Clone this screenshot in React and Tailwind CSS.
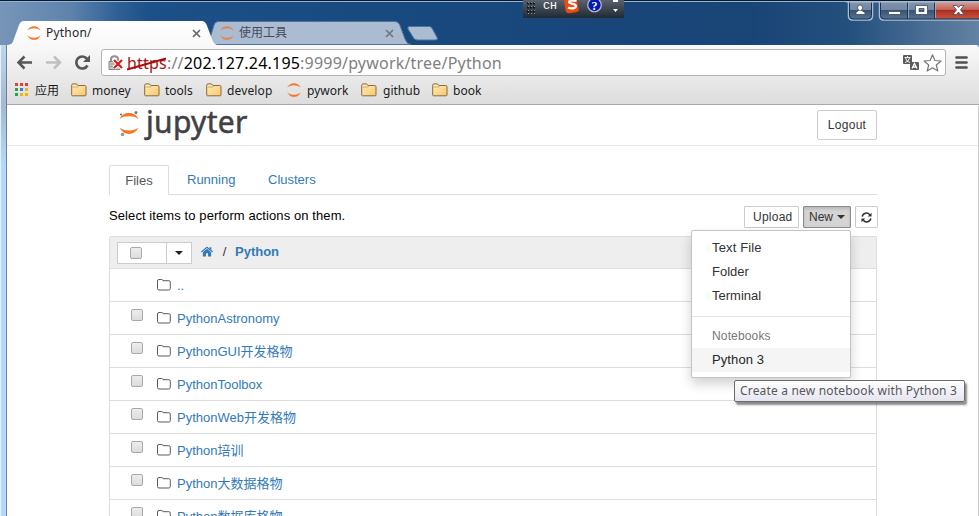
import React from "react";

const UI = "font-['Noto_Sans','Noto_Sans_CJK_SC',sans-serif]";
const PAGE = "font-['Liberation_Sans','Noto_Sans_CJK_SC',sans-serif]";

function Ring({ className = "" }) {
  return (
    <svg className={"shrink-0 " + className} width="14" height="14" viewBox="0 0 14 14">
      <path d="M0.3 4.6C2 1.400 4.500.2 7 .2s5 1.200 6.700 4.400C11.500 3 9.500 2.300 7 2.300S2.500 3 .3 4.600z" fill="#f37726" />
      <path d="M0.3 9.400C2 12.600 4.500 13.800 7 13.800s5-1.200 6.700-4.400C11.500 11 9.500 11.700 7 11.700S2.500 11 .3 9.400z" fill="#f37726" />
    </svg>
  );
}

function BookmarkFolder() {
  return (
    <svg className="shrink-0" width="16" height="14" viewBox="0 0 16 14">
      <defs>
        <linearGradient id="fold" x1="0" y1="0" x2="1" y2="1">
          <stop offset="0" stopColor="#ffefbb" />
          <stop offset="1" stopColor="#f9c66c" />
        </linearGradient>
      </defs>
      <path d="M.7 12V2.200Q.7.9 2 .9h3.600l1.300 1.600h6.800q1.300 0 1.300 1.300V12q0 .8-.8.8H1.500Q.7 12.800.7 12z" fill="url(#fold)" stroke="#8b6841" />
      <path d="M1.500 4h5l1.300-1" fill="none" stroke="#c9985a" strokeWidth=".8" />
    </svg>
  );
}

function Close({ className = "" }) {
  return (
    <svg className={className} width="9" height="9" viewBox="0 0 9 9">
      <path d="M1 1l7 7M8 1L1 8" stroke="#63666b" strokeWidth="1.700" />
    </svg>
  );
}

function TabStrip() {
  return (
    <div className="relative h-[45px] w-full shrink-0">
      <svg className="absolute left-0 top-0" width="979" height="46" viewBox="0 0 979 46">
        <defs>
          <linearGradient id="tab" x1="0" y1="0" x2="0" y2="1">
            <stop offset="0" stopColor="#ffffff" />
            <stop offset="1" stopColor="#f8f8f8" />
          </linearGradient>
        </defs>
        <path d="M203 44.500C208 44.500 208.500 43 209.500 40L214 25Q215 21.500 218.500 21.500H395Q398.500 21.500 399.800 25L405 39Q407 44.500 411 44.500z" fill="#abbbd1" stroke="#51739b" />
        <path d="M409.500 26.500h20q2 0 3 2.500l4.600 8.500q1 2.500-1.600 2.500h-18q-3.500 0-4.500-3l-5-8q-.8-2.500 1.500-2.500z" fill="#abbbd1" stroke="#51739b" />
        <path d="M7 46V45C12 44.500 12.500 43 13.500 40L19 25Q20.500 21 24 21H202Q205 21 206.500 24.500L212 39Q214 45 218 45V46z" fill="url(#tab)" />
      </svg>
      <div className={"relative flex h-full items-start pl-[27px] pt-[26px] text-[12px] leading-[14px] text-[#24262c] " + UI}>
        <Ring />
        <span className="ml-[5px] w-[146px] tracking-[.2px]">Python/</span>
        <Close className="mt-[3px]" />
        <Ring className="ml-[19px] opacity-80" />
        <span className="ml-[5px] w-[146px] text-[#454d5c]">使用工具</span>
        <Close className="mt-[3px] opacity-80" />
      </div>
    </div>
  );
}

function WindowButtons() {
  return (
    <svg className="absolute left-[846px] top-0" width="133" height="22" viewBox="0 0 133 22">
      <defs>
        <linearGradient id="glass" x1="0" y1="0" x2="0" y2="1">
          <stop offset="0" stopColor="#8295ad" />
          <stop offset=".45" stopColor="#7288a3" />
          <stop offset=".5" stopColor="#385475" />
          <stop offset="1" stopColor="#587797" />
        </linearGradient>
        <linearGradient id="danger" x1="0" y1="0" x2="0" y2="1">
          <stop offset="0" stopColor="#d59b91" />
          <stop offset=".45" stopColor="#c5655a" />
          <stop offset=".5" stopColor="#aa2e20" />
          <stop offset="1" stopColor="#c8513c" />
        </linearGradient>
      </defs>
      <path d="M2.500 1v15q0 4 4 4h16q4 0 4-4V1" fill="url(#glass)" stroke="#a9bdd2" strokeWidth="1.500" />
      <path d="M3.500 1v14.500q0 3.500 3.500 3.500h15q3.500 0 3.500-3.500V1" fill="none" stroke="#1c3554" />
      <path d="M33.500 1v15q0 4 4 4H134V1z" fill="url(#glass)" stroke="#a9bdd2" strokeWidth="1.500" />
      <path d="M89 2h44v16.500H89z" fill="url(#danger)" />
      <path d="M34.500 1v14.500q0 3.500 3.500 3.500H133M61.500 1v18M88.500 1v18" fill="none" stroke="#1c3554" />
      <path d="M62.500 2v16M89.500 2v16" stroke="#a9bbcd" strokeOpacity=".7" />
      <path d="M0 1h133v1.500H0z" fill="#a9bdd2" />
      <path d="M0 0h133v1H0z" fill="#0c1a2c" />
      <g fill="#fff" stroke="#3b4a5e" strokeWidth=".8">
        <path d="M10 14.500v-2l2.500-2h1q-2-1-2-3T14 5t2.600 2.500-2 3h1L19 12.500v2z" />
        <path d="M42.500 11.500h12v3h-12z" />
        <path fillRule="evenodd" d="M69.500 5.500h12v9h-12zM73 8.500v3h5v-3z" />
        <path d="M107 5.500h3.500l2 2 2-2h3.500l-3.500 4.300 3.500 4.700h-3.500l-2-2.400-2 2.400H107l3.500-4.700z" />
      </g>
    </svg>
  );
}

function ImeBar() {
  return (
    <div className="absolute left-[523px] top-0 flex h-[18px] w-[101px] items-start bg-linear-to-b from-[#59626d] to-[#202a35]">
      <svg width="101" height="18" viewBox="0 0 101 18">
        <path d="M4 3.500h8M4 7.500h8M4 11.500h8" stroke="#0e1319" strokeWidth="2" strokeDasharray="2 1" />
        <path d="M5 2.500h8M5 6.500h8M5 10.500h8M5 13.500h8" stroke="#8b939c" strokeDasharray="1 2" />
        <text x="20" y="9" fill="#fff" fontSize="11.500" fontFamily="Liberation Mono">CH</text>
        <path d="M41 0h13l2 10q-1 2-3 2.300l-7 1q-3 0-3.500-3z" fill="#f2470d" />
        <path d="M53.500 1q-7-1.500-7.500 1c0 2 7 1 7 4 0 2.500-5 3-8 1.500" fill="none" stroke="#fff" strokeWidth="2.300" />
        <circle cx="71.500" cy="5" r="6.800" fill="#0717b5" stroke="#b1b8cf" strokeWidth="1.300" />
        <text x="68.500" y="9.500" fill="#fff" fontSize="12" fontWeight="bold" fontFamily="Liberation Serif">?</text>
        <path d="M90 0h5v2h-5zM90 9h5l-2.500 3z" fill="#fff" />
      </svg>
    </div>
  );
}

function Toolbar() {
  return (
    <div className="flex h-[34px] shrink-0 items-start pt-[3px]">
      <svg className="shrink-0" width="94" height="28" viewBox="7 49 94 28" fill="none">
        <path d="M32 62.500H19M24.500 56.500l-6 6 6 6" stroke="#575757" strokeWidth="2.500" />
        <path d="M46 62.500h13M54 56.500l6 6-6 6" stroke="#c0c0c0" strokeWidth="2.500" />
        <path d="M87.500 65.500a6 6 0 1 1-.7-7" stroke="#575757" strokeWidth="2.700" />
        <path d="M90 55v7h-7z" fill="#575757" />
      </svg>
      <div className={"flex h-[27px] w-[845px] items-center rounded-[3px] border border-[#b4b4b4] bg-white pl-[6px] " + UI}>
        <svg className="shrink-0" width="17" height="16" viewBox="0 0 17 16">
          <path d="M3 7V4.500Q3 1.200 6.500 1.200T10 4.500V7" fill="none" stroke="#909090" strokeWidth="2" />
          <path d="M1 6.500h11v8H1z" fill="#c7c7c7" stroke="#858585" />
          <path d="M2 9h9M2 11.500h9" stroke="#9d9d9d" />
          <path d="M6 5l8 8M14 5l-8 8" stroke="#fff" strokeWidth="4" />
          <path d="M6 5l8 8M14 5l-8 8" stroke="#d41e1e" strokeWidth="2.200" />
        </svg>
        <div className="relative ml-[2px] whitespace-nowrap text-[16px] leading-[22px] tracking-[.2px] text-[#808080]">
          <span className="text-[#a31515]">https</span>://<span className="text-black">202.127.24.195</span>:9999/pywork/tree/Python
          <svg className="absolute left-0 top-[4px]" width="40" height="16" viewBox="0 0 40 16">
            <path d="M0 13.500L39 2.500" stroke="#a80d0d" strokeWidth="2" />
          </svg>
        </div>
        <svg className="ml-auto mr-[2px] shrink-0" width="40" height="20" viewBox="0 0 40 20">
          <path d="M1 2h7q1 0 1 1v7q0 1-1 1H1q-1 0-1-1V3q0-1 1-1zM8 9h7q1 0 1 1v6q0 1-1 1H8q-1 0-1-1v-6q0-1 1-1z" fill="#5b5b5b" />
          <path d="M1.500 4.500h6M4.500 3v1.500M2.500 5q1 4 4.500 4.500M6.500 5q-1 4-4.500 4.500" stroke="#fff" strokeWidth=".9" fill="none" />
          <path d="M9 15.500L11.500 10.500 14 15.500M10 14h3" stroke="#fff" strokeWidth="1.300" fill="none" />
          <path d="M29.500 1.800l2.400 5.700 6.100.5-4.700 4 1.500 6-5.300-3.200-5.300 3.200 1.500-6-4.700-4 6.100-.5z" fill="#fff" stroke="#777" strokeWidth="1.200" strokeLinejoin="round" />
        </svg>
      </div>
      <svg className="ml-[9px] mt-[7px]" width="14" height="13" viewBox="0 0 14 13">
        <path d="M1.500 1.500h10M1.500 6.500h10M1.500 11.500h10" stroke="#505050" strokeWidth="2.700" strokeLinecap="round" />
      </svg>
    </div>
  );
}

function Bookmarks() {
  return (
    <div className={"flex h-[25px] shrink-0 items-start border-b border-[#a9a9a9] pl-[8px] pt-[3px] text-[12px] leading-[16px] text-[#1c1c1c] " + UI}>
      <div className="grid shrink-0 grid-cols-3 gap-[2px]">
        {["bg-[#e83c32]", "bg-[#e83c32]", "bg-[#e83c32]", "bg-[#2ba24c]", "bg-[#3478f0]", "bg-[#f5b400]", "bg-[#2ba24c]", "bg-[#f5b400]", "bg-[#f5b400]"].map((c, i) => (
          <i key={i} className={"size-[3px] " + c} />
        ))}
      </div>
      <span className="ml-[7px] w-[36px] whitespace-nowrap">应用</span>
      <BookmarkFolder />
      <span className="ml-[5px] w-[52px]">money</span>
      <BookmarkFolder />
      <span className="ml-[5px] w-[41px]">tools</span>
      <BookmarkFolder />
      <span className="ml-[5px] w-[60px] tracking-[.15px]">develop</span>
      <Ring />
      <span className="ml-[6px] w-[54px]">pywork</span>
      <BookmarkFolder />
      <span className="ml-[6px] w-[49px]">github</span>
      <BookmarkFolder />
      <span className="ml-[5px]">book</span>
    </div>
  );
}

function Logo() {
  return (
    <div className="flex h-[38px] w-[145px] items-start pl-[10px]">
      <svg className="mt-[5px] shrink-0" width="22" height="28" viewBox="0 0 22 28">
        <path d="M1.500 9C4 4.500 7 3.100 11 3.100s7 1.400 9.500 5.900C18 7 15 6.300 11 6.300S4 7 1.500 9z" fill="#f37726" />
        <path d="M1.500 17.500C4 22 7 23.900 11 23.900s7-1.900 9.500-6.400C18 19.400 15 20.500 11 20.500S4 19.400 1.500 17.500z" fill="#f37726" />
        <circle cx="18" cy="2.500" r="1.500" fill="#77787b" />
        <circle cx="3" cy="4.500" r="1" fill="#616262" />
        <circle cx="4.500" cy="24.500" r="1.800" fill="#989798" />
      </svg>
      <span className="ml-[6px] whitespace-nowrap font-['Noto_Sans'] text-[30px] leading-[33px] tracking-[.3px] text-[#414042] [-webkit-text-stroke:.5px_#414042]">jupyter</span>
    </div>
  );
}

function Check() {
  return <span className="block size-[12px] shrink-0 rounded-[2px] border border-[#a9a9a9] bg-linear-to-b from-[#ededed] to-[#dcdcdc]" />;
}

function FolderIcon() {
  return (
    <svg className="shrink-0" width="14" height="12" viewBox="0 0 14 12">
      <path d="M.5 9.500v-7.500Q.5.500 2 .5h2.500Q6 .5 6 1.700h5.800q1.500 0 1.500 1.500v6.300q0 1.500-1.500 1.500H2Q.5 11 .5 9.500z" fill="none" stroke="#5a5a5a" />
    </svg>
  );
}

const ITEMS = ["..", "PythonAstronomy", "PythonGUI开发格物", "PythonToolbox", "PythonWeb开发格物", "Python培训", "Python大数据格物", "Python数据库格物"];

function NewMenu() {
  return (
    <div className="absolute left-[691px] top-[230px] h-[148px] w-[160px] rounded-[2px] border border-[#c4c4c4] bg-white pt-[5px] text-[13px] leading-[24px] text-[#333] shadow-[0_6px_12px_rgba(0,0,0,.18)]">
      <div className="pl-[20px] tracking-[.15px]">Text File</div>
      <div className="pl-[20px]">Folder</div>
      <div className="pl-[20px]">Terminal</div>
      <div className="mb-[8px] mt-[8px] h-px bg-[#e5e5e5]" />
      <div className="h-[23px] pl-[20px] text-[12px] leading-[22px] tracking-[.15px] text-[#777]">Notebooks</div>
      <div className="bg-[#f5f5f5] pl-[20px] tracking-[.1px] text-[#262626]">Python 3</div>
    </div>
  );
}

function Notebook() {
  return (
    <div className={"flex min-h-0 flex-1 flex-col bg-white text-[13px] text-black " + PAGE}>
      <div className="flex h-[41px] shrink-0 justify-between border-b border-[#e7e7e7] pl-[101px] pr-[102px]">
        <Logo />
        <div className="mt-[5px] flex h-[30px] w-[60px] items-center justify-center rounded-[2px] border border-[#ccc] text-[12px] tracking-[.3px] text-[#333]">Logout</div>
      </div>
      <div className="ml-[102px] mt-[19px] flex h-[30px] w-[768px] shrink-0 border-b border-[#ddd] leading-[30px] text-[#337ab7]">
        <div className="h-[30px] w-[60px] rounded-t-[2px] border border-b-0 border-[#ddd] bg-white text-center text-[#555]">Files</div>
        <span className="ml-[18px] w-[81px]">Running</span>
        <span>Clusters</span>
      </div>
      <div className="ml-[102px] mt-[11px] flex h-[22px] w-[769px] shrink-0 items-start text-[12px] leading-[20px] text-[#333]">
        <span className="flex-1 text-[13px] tracking-[.09px] text-black">Select items to perform actions on them.</span>
        <div className="h-[22px] w-[55px] rounded-[1px] border border-[#ccc] pl-[8px] tracking-[.25px]">Upload</div>
        <div className="ml-[4px] flex h-[22px] w-[48px] items-center rounded-[1px] border border-[#8c8c8c] bg-[#d4d4d4] pl-[5px] shadow-[inset_0_2px_3px_rgba(0,0,0,.13)]">
          New
          <i className="ml-[4px] border-x-4 border-t-4 border-x-transparent border-t-[#333]" />
        </div>
        <div className="ml-[4px] flex h-[22px] w-[23px] items-center justify-center rounded-[1px] border border-[#ccc]">
          <svg width="11" height="11" viewBox="0 0 12 12">
            <path d="M1.300 5A4.600 4.600 0 0 1 9.500 3M10.700 7A4.600 4.600 0 0 1 2.500 9" fill="none" stroke="#333" strokeWidth="1.700" />
            <path d="M11.500.8V5H7.300zM.5 11.200V7h4.200z" fill="#333" />
          </svg>
        </div>
      </div>
      <div className="ml-[102px] mt-[8px] w-[768px] shrink-0 overflow-hidden rounded-t-[2px] border border-b-0 border-[#ddd]">
        <div className="flex h-[31px] items-start bg-[#eee] pl-[7px] pt-[5px]">
          <div className="flex h-[22px] w-[75px] items-center border border-[#ccc] bg-white pl-[12px]">
            <Check />
            <span className="ml-[24px] flex h-full flex-1 items-center justify-center border-l border-[#ccc]">
              <i className="border-x-4 border-t-4 border-x-transparent border-t-[#222]" />
            </span>
          </div>
          <svg className="ml-[9px] mt-[4px]" width="12" height="11" viewBox="0 0 13 11">
            <path d="M6.500 0L13 5.600l-.8.9L6.500 1.700.8 6.500 0 5.600zM9.300.8h1.900v3L9.300 2.200zM6.500 2.600l4.500 3.800V11H7.600V7.500H5.400V11H2V6.400z" fill="#337ab7" />
          </svg>
          <span className="ml-[5px] w-[13px] text-center leading-[19px] text-[#333]">/</span>
          <b className="ml-[4px] leading-[19px] text-[#337ab7]">Python</b>
        </div>
        {ITEMS.map((name, i) => (
          <div key={name} className="flex h-[33px] items-start border-t border-[#ddd] pl-[21px] text-[#337ab7]">
            <span className="mt-[7px] w-[26px]">{i > 0 && <Check />}</span>
            <span className="mt-[10px]"><FolderIcon /></span>
            <span className="ml-[6px] mt-[7px] whitespace-nowrap leading-[20px]">{name}</span>
          </div>
        ))}
      </div>
    </div>
  );
}

export default function App() {
  return (
    <div className="relative flex h-[516px] w-[979px] flex-col overflow-hidden bg-[#1a4b82] bg-[linear-gradient(90deg,#7795b8_0px,#5f83ad_70px,#2f5f96_118px,#1c5088_150px,#184a80_360px,#194476_750px,#24507e_850px,#6482a3_979px)]">
      <div className="absolute left-0 top-0 h-[2px] w-full border-b border-[#8fb4d8] bg-[#0c1a2c]" />
      <div className="absolute bottom-0 left-0 top-[45px] w-[7px] border-l border-r border-l-[#e5f1ff] border-r-[#6d8198] bg-[linear-gradient(180deg,#c3d6ea_0px,#a3bad3_60px,#b4d9fd_120px)]" />
      <TabStrip />
      <div className="relative ml-[7px] flex min-h-0 flex-1 flex-col overflow-hidden rounded-tr-[3px] border-t border-[#f9f9f9]">
        <div className="flex shrink-0 flex-col bg-linear-to-b from-[#f9f9f9] to-[#dcdcdc]">
          <Toolbar />
          <Bookmarks />
        </div>
        <Notebook />
        <div className="absolute bottom-0 right-0 top-[60px] w-px bg-[#ccc]" />
      </div>
      <ImeBar />
      <WindowButtons />
      <div className={PAGE}>
        <NewMenu />
      </div>
      <div className={"absolute left-[734px] top-[380px] flex h-[22px] w-[231px] items-center whitespace-nowrap rounded-[2px] border border-[#6b6b6b] bg-linear-to-b from-white to-[#e5e5f1] pl-[5px] text-[12px] tracking-[.18px] text-[#575757] shadow-[2px_3px_2px_rgba(0,0,0,.45)] " + UI}>
        Create a new notebook with Python 3
      </div>
    </div>
  );
}
